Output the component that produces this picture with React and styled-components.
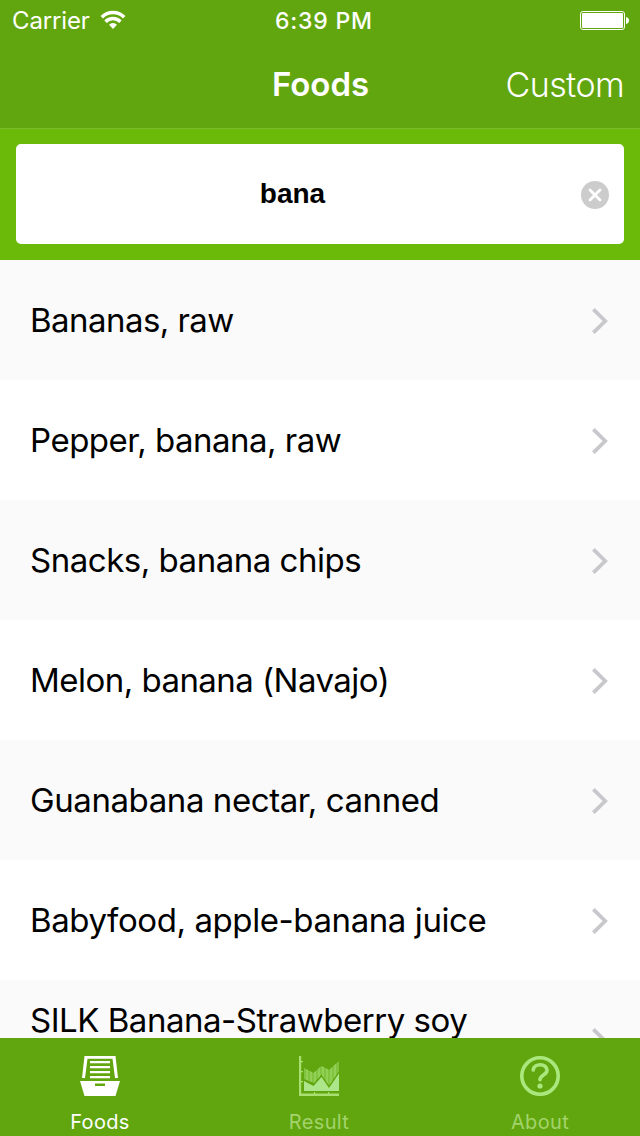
import React from "react";
import styled, { createGlobalStyle } from "styled-components";

const GlobalStyle = createGlobalStyle`
  * { box-sizing: border-box; }
  body { margin: 0; background: #fff; font-family: Inter, "Liberation Sans", sans-serif; }
`;

const Screen = styled.div`
  display: flex;
  flex-direction: column;
  width: 640px;
  height: 1136px;
  overflow: hidden;
  background: #fff;
`;

const Header = styled.header`
  flex: none;
  height: 129px;
  background: #61a60e;
  border-bottom: 1px solid #7cbb2e;
  color: #fff;
`;

const StatusBar = styled.div`
  display: grid;
  grid-template-columns: 1fr auto 1fr;
  align-items: center;
  height: 40px;
  padding: 0 11px 0 12px;
`;

const Carrier = styled.div`
  display: flex;
  align-items: center;
  gap: 10px;
  font-size: 24px;
  line-height: 38px;
  letter-spacing: -0.15px;
  padding-top: 2px;
`;

const Clock = styled.div`
  font-size: 23px;
  font-weight: 500;
  line-height: 38px;
  letter-spacing: 0.8px;
  padding: 2px 0 0 7px;
`;

const Battery = styled.svg`
  justify-self: end;
`;

const NavBar = styled.div`
  display: grid;
  grid-template-columns: 1fr auto 1fr;
  align-items: center;
  height: 88px;
  padding: 0 16px;
  line-height: 88px;
`;

const Title = styled.h1`
  grid-column: 2;
  margin: 0;
  padding-left: 1px;
  font-size: 33px;
  font-weight: 600;
`;

const NavAction = styled.span`
  justify-self: end;
  font-size: 34px;
  font-weight: 300;
  line-height: 86px;
  letter-spacing: -0.6px;
  padding-top: 2px;
`;

const SearchArea = styled.div`
  flex: none;
  height: 131px;
  padding: 15px 16px 16px;
  background: #6bb909;
`;

const SearchField = styled.div`
  display: grid;
  grid-template-columns: 44px 1fr 43px;
  align-items: center;
  height: 100px;
  border-radius: 5px;
  background: #fff;
`;

const Query = styled.span`
  grid-column: 2;
  text-align: center;
  font-family: "Liberation Sans", sans-serif;
  font-size: 28px;
  font-weight: 700;
  line-height: 32px;
  color: #000;
  padding-right: 56px;
`;

const ClearButton = styled.span`
  display: flex;
  padding-top: 2px;
`;

const FoodList = styled.main`
  flex: 1;
  min-height: 0;
  overflow: hidden;
`;

const FoodRow = styled.div`
  display: flex;
  align-items: center;
  justify-content: space-between;
  height: 120px;
  padding: 2px 32px 0 30px;
  background: #fff;
  &:nth-child(odd) { background: #fafafa; }
`;

const FoodName = styled.span`
  align-self: ${(p) => (p.$multiline ? "flex-start" : "center")};
  margin-top: ${(p) => (p.$multiline ? 20 : -2)}px;
  font-size: 33px;
  line-height: 36px;
  letter-spacing: ${(p) => p.$tracking}px;
  white-space: nowrap;
  color: #000;
`;

const TabBar = styled.nav`
  flex: none;
  display: grid;
  grid-template-columns: 200px 240px 200px;
  height: 98px;
  background: #61a60e;
`;

const Tab = styled.div`
  display: flex;
  flex-direction: column;
  align-items: center;
  padding: 18px ${(p) => p.$inset || 0}px 0 0;
  color: ${(p) => (p.$active ? "#fff" : "#a3d36b")};
`;

const TabLabel = styled.span`
  margin-top: 14px;
  font-size: 20px;
  line-height: 24px;
  letter-spacing: 0.35px;
`;

const WifiIcon = styled.svg`
  margin-bottom: 2px;
`;

const Wifi = () => (
  <WifiIcon width="26" height="20" viewBox="0 0 26 20" fill="none" stroke="#fff" strokeWidth="3.5">
    <path d="M1.8 7.2a15.8 15.8 0 0 1 22.4 0" />
    <path d="M5.6 11.7a10.4 10.4 0 0 1 14.8 0" />
    <path d="M13 19l-4-4.200a5.600 5.600 0 0 1 8 0z" fill="#fff" stroke="none" />
  </WifiIcon>
);

const Chevron = () => (
  <svg width="16" height="26" viewBox="0 0 16 26" fill="none" stroke="#c7c7cc" strokeWidth="3.8">
    <path d="M1.4 1.4L13.200 13L1.4 24.6" />
  </svg>
);

const ClearIcon = () => (
  <svg width="28" height="28" viewBox="0 0 28 28">
    <circle cx="14" cy="14" r="14" fill="#ccc" />
    <path d="M9 9l10 10M19 9L9 19" stroke="#fff" strokeWidth="2.8" strokeLinecap="round" />
  </svg>
);

const DrawerIcon = () => (
  <svg width="40" height="40" viewBox="0 0 40 40" fill="#fff">
    <path d="M4.500 0h31L38 22h-3L32.500 2.800h-25L5 22H2z" />
    <path d="M10 5h20v2.300H10zM10 10h20v2.300H10zM10 15h20v2.300H10zM10 20h20v2.300H10z" />
    <path fillRule="evenodd" d="M0 25h40l-4.500 15h-31zM15 27.500v2.400h10v-2.400z" />
  </svg>
);

const ChartIcon = () => (
  <svg width="40" height="40" viewBox="0 0 40 40">
    <clipPath id="upperBand">
      <path d="M5 12l9.500 5L22.500 10l7.500 4L40 5v10L30 29.500 22.500 18.500 15 27 5 23z" />
    </clipPath>
    <path d="M0 0h2.200v37.500H40V40H0zM2 5h2v1.200H2zM2 15h2v1.200H2zM2 25h2v1.200H2zM15 36h1.200v2H15zM29 36h1.200v2H29z" fill="#a9e071" />
    <g clipPath="url(#upperBand)">
      <path d="M5 0h35v32H5z" fill="#80c440" />
      <path d="M8 0v32M12 0v32M16 0v32M20 0v32M24 0v32M28 0v32M32 0v32M36 0v32" stroke="#95d157" strokeWidth="1.8" />
    </g>
    <path d="M5 25l9.500 5 8-9L30 32l10-14.500V35H5z" fill="#ade68a" />
  </svg>
);

const HelpIcon = () => (
  <svg width="40" height="40" viewBox="0 0 40 40" fill="none" stroke="#a9e87c" strokeWidth="3.6">
    <circle cx="20" cy="20" r="18.2" />
    <path d="M13.200 14c.500-7 14-7 13.800.300-.300 5-7 4.500-7 9.500" strokeLinecap="round" />
    <circle cx="20" cy="30" r="2.6" fill="#a9e87c" stroke="none" />
  </svg>
);

const foods = [
  { name: "Bananas, raw", tracking: -0.55 },
  { name: "Pepper, banana, raw", tracking: -0.5 },
  { name: "Snacks, banana chips", tracking: -0.48 },
  { name: "Melon, banana (Navajo)", tracking: -0.53 },
  { name: "Guanabana nectar, canned", tracking: -0.42 },
  { name: "Babyfood, apple-banana juice", tracking: -0.41 },
  { name: "SILK Banana-Strawberry soy", tracking: -0.48, multiline: true },
];

const tabs = [
  { label: "Foods", Icon: DrawerIcon, active: true },
  { label: "Result", Icon: ChartIcon, inset: 2 },
  { label: "About", Icon: HelpIcon },
];

export default function App() {
  return (
    <>
      <GlobalStyle />
      <Screen>
        <Header>
          <StatusBar>
            <Carrier>Carrier <Wifi /></Carrier>
            <Clock>6:39 PM</Clock>
            <Battery width="49" height="19" viewBox="0 0 49 19">
              <rect x="0.5" y="0.5" width="44" height="18" rx="2.5" fill="none" stroke="#fff" />
              <rect x="2" y="2" width="41" height="15" rx="1" fill="#fff" />
              <path d="M46 6c4 .5 4 6.500 0 7z" fill="#fff" />
            </Battery>
          </StatusBar>
          <NavBar>
            <Title>Foods</Title>
            <NavAction>Custom</NavAction>
          </NavBar>
        </Header>
        <SearchArea>
          <SearchField>
            <Query>bana</Query>
            <ClearButton><ClearIcon /></ClearButton>
          </SearchField>
        </SearchArea>
        <FoodList>
          {foods.map((f) => (
            <FoodRow key={f.name}>
              <FoodName $tracking={f.tracking} $multiline={f.multiline}>{f.name}</FoodName>
              <Chevron />
            </FoodRow>
          ))}
        </FoodList>
        <TabBar>
          {tabs.map(({ label, Icon, active, inset }) => (
            <Tab key={label} $active={active} $inset={inset}>
              <Icon />
              <TabLabel>{label}</TabLabel>
            </Tab>
          ))}
        </TabBar>
      </Screen>
    </>
  );
}
